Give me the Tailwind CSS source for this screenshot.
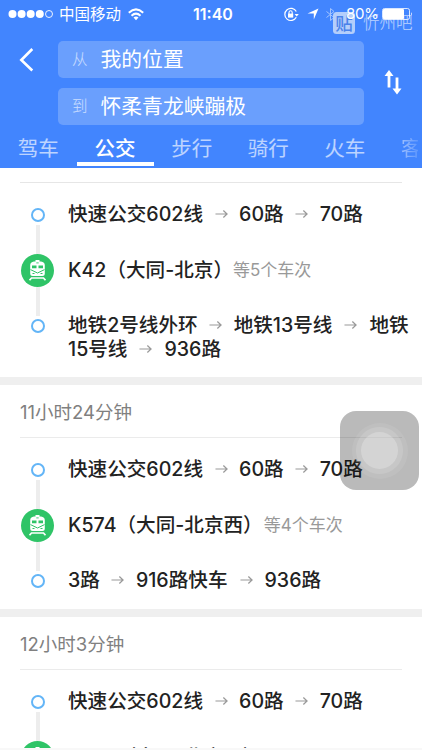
<!DOCTYPE html>
<html lang="zh-CN">
<head>
<meta charset="utf-8">
<title>公交路线</title>
<script src="https://cdn.jsdelivr.net/npm/@tailwindcss/browser@4"></script>
</head>
<body class="font-['Inter','Noto_Sans_CJK_SC',sans-serif] bg-white">
<svg class="hidden">
  <symbol id="arrow" viewBox="0 0 14 10"><path d="M0.5 5H13M9 1.2L13 5L9 8.8" fill="none" stroke="#999" stroke-width="1.3"/></symbol>
  <symbol id="train" viewBox="0 0 33 33">
    <circle cx="16.5" cy="16.5" r="16.5" fill="#2fc467"/>
    <path d="M14.500 6h4v1.600h1.500q3.800 0.600 3.800 3.600v8.300q0 2.500-2.500 2.500h-9.600q-2.500 0-2.500-2.500v-8.300q0-3 3.800-3.600h1.500z" fill="#fff"/>
    <path d="M11 11.500h4.500v2.700h-4.500zM17.500 11.500h4.500v2.700h-4.500z" fill="#2fc467"/>
    <path d="M9.500 15.600l7 3.400 7-3.400" fill="none" stroke="#2fc467" stroke-width="1"/>
    <path d="M15.300 8.900h2.400" stroke="#2fc467" stroke-width="0.900"/>
    <path d="M11.500 19.500h2M19.500 19.500h2" stroke="#2fc467" stroke-width="1.100"/>
    <path d="M8.500 26.300l2-2.300h12l2 2.300" stroke="#fff" stroke-width="1.700" fill="none"/>
  </symbol>
</svg>
<div class="relative flex h-[750px] w-[422px] flex-col overflow-hidden">
  <header class="flex h-[168px] shrink-0 flex-col bg-[#4285fe] text-white">
    <div class="flex h-[28px] items-center pl-[8px]">
      <svg class="h-[10px] w-[46px]" viewBox="0 0 46 10"><g fill="#fff"><circle cx="4.500" cy="5" r="4"/><circle cx="13.600" cy="5" r="4"/><circle cx="22.700" cy="5" r="4"/><circle cx="31.800" cy="5" r="4"/></g><circle cx="41" cy="5" r="3.500" fill="none" stroke="#fff" stroke-width="0.900"/></svg>
      <span class="ml-[5px] w-[63px] pt-[2px] text-[15.500px] leading-[28px] whitespace-nowrap">中国移动</span>
      <svg class="ml-[6px] h-[13px] w-[16px]" viewBox="0 0 16 13"><g fill="none" stroke="#fff" stroke-width="2"><path d="M0.800 4.700Q8-2 15.200 4.700"/><path d="M3.500 7.700Q8 3.500 12.500 7.700"/></g><path d="M5.500 9.500Q8 7.300 10.500 9.500L8 12.300z" fill="#fff"/></svg>
      <span class="ml-[49px] w-[42px] text-[16px] font-semibold leading-[28px]">11:40</span>
      <svg class="ml-[48px] h-[15px] w-[16px]" viewBox="0 0 16 15"><path d="M13.300 4.500A6.100 6.100 0 1 0 13.300 10.300" fill="none" stroke="#fff" stroke-width="1.200"/><path d="M11.600 7h4.200l-2.100 2.600z" fill="#fff"/><path d="M5 6.600h5.200v4H5z" fill="#fff"/><path d="M6 7V5.400a1.600 1.600 0 0 1 3.200 0V7" fill="none" stroke="#fff" stroke-width="1.100"/></svg>
      <svg class="ml-[8px] h-[12px] w-[12px]" viewBox="0 0 12 12"><path d="M11.500 0.500L6.800 11.500V5.600H0.500z" fill="#fff"/></svg>
      <svg class="ml-[7px] h-[13px] w-[9px] opacity-50" viewBox="0 0 9 13"><path d="M0.500 3.500l7.500 6-3.500 3V0.500l3.500 3-7.500 6" fill="none" stroke="#fff" stroke-width="1"/></svg>
      <span class="relative z-10 ml-[11px] w-[33px] text-[15px] leading-[28px] tracking-[-0.2px]">80%</span>
      <svg class="relative z-10 ml-[3px] h-[12px] w-[31px]" viewBox="0 0 31 12"><rect x="0.500" y="0.500" width="27" height="11" rx="2" fill="none" stroke="#fff" stroke-opacity=".8"/><rect x="1" y="1" width="21" height="10" rx="1" fill="#fff"/><path d="M29 4q1.800 2 0 4z" fill="#fff"/></svg>
    </div>
    <div class="flex h-[108px] pt-[12.500px]">
      <div class="w-[58px] pt-[7px] pl-[19px]">
        <svg class="h-[24px] w-[15px]" viewBox="0 0 15 24"><path d="M13.300 1L2.300 12L13.300 22.500" fill="none" stroke="#fff" stroke-width="2.600"/></svg>
      </div>
      <div class="flex w-[306px] flex-col gap-[10.500px]">
        <div class="flex h-[37px] items-center rounded-[5px] bg-[#6a9ffd] pl-[14px] leading-[37px]"><span class="w-[28.500px] text-[15.500px] font-light text-white/65">从</span><span class="text-[20.800px]">我的位置</span></div>
        <div class="flex h-[37px] items-center rounded-[5px] bg-[#6a9ffd] pl-[14px] leading-[37px]"><span class="w-[28.500px] text-[15.500px] font-light text-white/65">到</span><span class="text-[20.800px]">怀柔青龙峡蹦极</span></div>
      </div>
      <svg class="mt-[29px] ml-[20px] h-[25px] w-[18px]" viewBox="0 0 18 25"><path d="M5 4.500V17.500M13 7.500V20" stroke="#fff" stroke-width="2.800"/><path d="M0.500 6L5 0L9.500 6zM8.500 18.500L13 24.500L17.500 18.500z" fill="#fff"/></svg>
    </div>
    <nav class="flex h-[32px] overflow-hidden text-[20.500px] leading-[25px] text-white/65">
      <span class="w-[76.500px] shrink-0 text-center">驾车</span>
      <span class="flex w-[77px] shrink-0 flex-col items-center justify-between font-medium text-white"><span class="h-[26px]">公交</span><span class="mb-[2px] h-[4px] w-full bg-white"></span></span>
      <span class="w-[76.500px] shrink-0 text-center">步行</span>
      <span class="w-[76.500px] shrink-0 text-center">骑行</span>
      <span class="w-[76.500px] shrink-0 text-center">火车</span>
      <span class="ml-[18px] w-[17px] shrink-0 overflow-hidden bg-linear-to-r from-white/50 to-white/15 bg-clip-text whitespace-nowrap text-transparent">客</span>
    </nav>
  </header>

  <main class="flex flex-col text-[19.600px] leading-[24px] font-medium text-[#222]">
    <section class="flex flex-col">
      <div class="mx-[20px] h-[15px] border-b border-[#e6e6e6]"></div>
      <div class="flex h-[194px] pl-[21px]">
        <div class="flex w-[33px] shrink-0 flex-col items-center pt-[25px]">
          <span class="size-[14px] rounded-full border-[2.500px] border-[#63b5f7]"></span>
          <span class="mt-[3px] h-[29px] w-[4px] bg-[#ededed]"></span>
          <svg class="size-[33px] shrink-0"><use href="#train"/></svg>
          <span class="mb-[3px] h-[29px] w-[4px] bg-[#ededed]"></span>
          <span class="size-[14px] rounded-full border-[2.500px] border-[#63b5f7]"></span>
        </div>
        <div class="ml-[14px] flex flex-col pt-[19px] whitespace-nowrap">
          <div class="flex items-center"><span>快速公交602线</span><svg class="mx-[11.500px] h-[10px] w-[13px]"><use href="#arrow"/></svg><span>60路</span><svg class="mx-[11.500px] h-[10px] w-[13px]"><use href="#arrow"/></svg><span>70路</span></div>
          <div class="mt-[32px] flex h-[24px] items-center"><span>K42（大同-北京）</span><span class="text-[17px] font-normal text-[#999]">等5个车次</span></div>
          <div class="mt-[31px] flex items-center"><span>地铁2号线外环</span><svg class="mx-[11.500px] h-[10px] w-[13px]"><use href="#arrow"/></svg><span>地铁13号线</span><svg class="mx-[12px] h-[10px] w-[13px]"><use href="#arrow"/></svg><span>地铁</span></div>
          <div class="flex items-center"><span>15号线</span><svg class="mx-[12px] h-[10px] w-[13px]"><use href="#arrow"/></svg><span>936路</span></div>
        </div>
      </div>
    </section>

    <section class="flex flex-col border-t-8 border-[#efefef]">
      <h2 class="mx-[20px] h-[53px] border-b border-[#ebebeb] text-[18.500px] leading-[54px] font-normal text-[#808080]">11小时24分钟</h2>
      <div class="flex h-[171px] pl-[21px]">
        <div class="flex w-[33px] shrink-0 flex-col items-center pt-[25px]">
          <span class="size-[14px] rounded-full border-[2.500px] border-[#63b5f7]"></span>
          <span class="mt-[3px] h-[29px] w-[4px] bg-[#ededed]"></span>
          <svg class="size-[33px] shrink-0"><use href="#train"/></svg>
          <span class="mb-[3px] h-[29px] w-[4px] bg-[#ededed]"></span>
          <span class="size-[14px] rounded-full border-[2.500px] border-[#63b5f7]"></span>
        </div>
        <div class="ml-[14px] flex flex-col pt-[19px] whitespace-nowrap">
          <div class="flex items-center"><span>快速公交602线</span><svg class="mx-[11.500px] h-[10px] w-[13px]"><use href="#arrow"/></svg><span>60路</span><svg class="mx-[11.500px] h-[10px] w-[13px]"><use href="#arrow"/></svg><span>70路</span></div>
          <div class="mt-[32px] flex h-[24px] items-center"><span>K574（大同-北京西）</span><span class="ml-[1px] text-[17px] font-normal text-[#999]">等4个车次</span></div>
          <div class="mt-[31px] flex items-center"><span>3路</span><svg class="mx-[11.500px] h-[10px] w-[13px]"><use href="#arrow"/></svg><span>916路快车</span><svg class="mx-[12px] h-[10px] w-[13px]"><use href="#arrow"/></svg><span>936路</span></div>
        </div>
      </div>
    </section>

    <section class="flex flex-col border-t-8 border-[#efefef]">
      <h2 class="mx-[20px] h-[53px] border-b border-[#ebebeb] text-[18.500px] leading-[54px] font-normal text-[#808080]">12小时3分钟</h2>
      <div class="flex h-[171px] pl-[21px]">
        <div class="flex w-[33px] shrink-0 flex-col items-center pt-[25px]">
          <span class="size-[14px] shrink-0 rounded-full border-[2.500px] border-[#63b5f7]"></span>
          <span class="mt-[3px] h-[29px] w-[4px] shrink-0 bg-[#ededed]"></span>
          <svg class="size-[33px] shrink-0"><use href="#train"/></svg>
        </div>
        <div class="ml-[14px] flex flex-col pt-[19px] whitespace-nowrap">
          <div class="flex items-center"><span>快速公交602线</span><svg class="mx-[11.500px] h-[10px] w-[13px]"><use href="#arrow"/></svg><span>60路</span><svg class="mx-[11.500px] h-[10px] w-[13px]"><use href="#arrow"/></svg><span>70路</span></div>
          <div class="mt-[32px] flex h-[24px] items-center"><span>K574（大同-北京西）</span><span class="ml-[1px] text-[17px] font-normal text-[#999]">等4个车次</span></div>
        </div>
      </div>
    </section>
  </main>

  <div class="absolute top-[11px] left-[333px] flex items-center text-white/65">
    <svg class="h-[22px] w-[22px]" viewBox="0 0 22 22"><rect width="22" height="22" rx="3.500" fill="#b4cefb"/><text x="11" y="17.500" text-anchor="middle" font-size="17.500" font-weight="500" fill="#4a82ea" font-family="Noto Sans CJK SC">贴</text></svg>
    <span class="ml-[8px] pt-[1px] text-[16.500px] leading-[22px] font-light">忻州吧</span>
  </div>
  <div class="absolute top-[411px] left-[340px] flex size-[79px] items-center justify-center rounded-[16px] bg-black/27">
    <div class="flex size-[56px] items-center justify-center rounded-full bg-white/8"><div class="flex size-[47px] items-center justify-center rounded-full bg-white/13"><div class="size-[37px] rounded-full bg-white/24"></div></div></div>
  </div>
  <div class="absolute bottom-0 left-0 h-[2px] w-full bg-[#f8f8f8]"></div>
</div>
</body>
</html>
